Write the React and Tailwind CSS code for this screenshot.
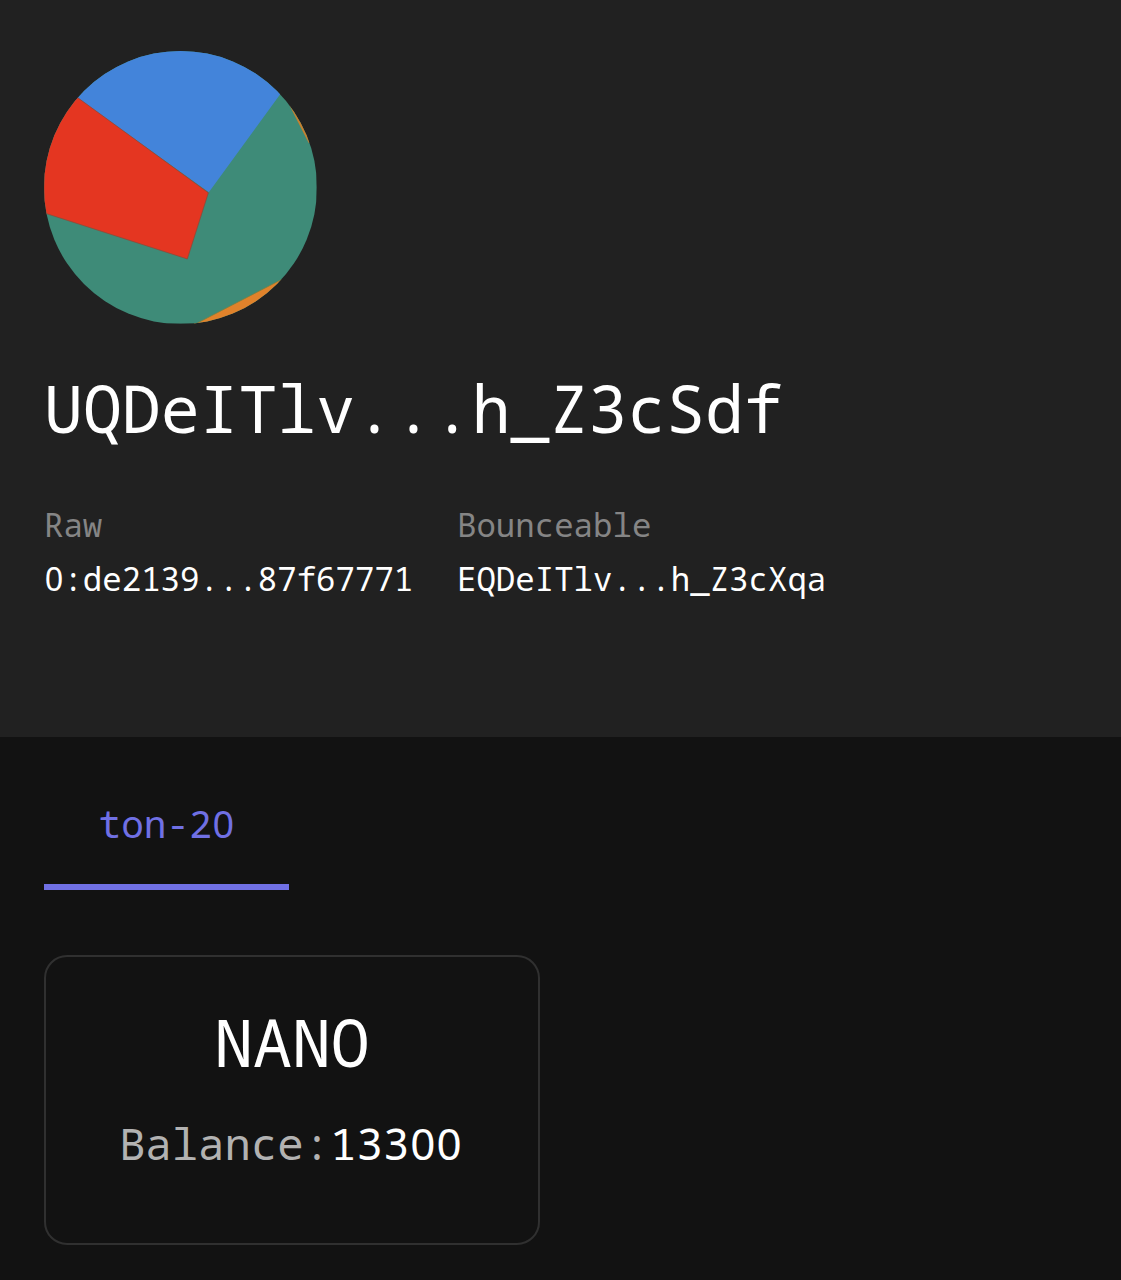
const ADDRESSES = [
  { label: "Raw", value: "0:de2139...87f67771", width: "w-[413px]" },
  { label: "Bounceable", value: "EQDeITlv...h_Z3cXqa", width: "w-[413px]" },
];

// Monospaced text whose zeros are plain rather than slashed.
function Mono({ children }) {
  return children.split(/(0)/).map((part, i) =>
    part === "0" ? (
      <span key={i} className="ml-[0.02em] font-['Noto_Sans'] tracking-[0.008em]">0</span>
    ) : (
      part
    )
  );
}

function Avatar() {
  return (
    <svg viewBox="0 0 272 272" className="block size-[272.6px] rounded-full">
      <rect width="272" height="272" fill="#3e8b78" />
      <path d="M0 0H272L235.500 43.500L164.500 141L33 47Z" fill="#4384da" />
      <path d="M0 23L33.500 46.500L164 141.500L143 207.500L0 161.500Z" fill="#e43621" stroke="#8f4a38" strokeWidth="0.800" />
      <path d="M150 273L238 227.500V272H150Z" fill="#e0822b" stroke="#7d8040" strokeWidth="0.800" />
      <path d="M245 54.500L264 91.500L272 91V54Z" fill="#c8802e" />
    </svg>
  );
}

export default function App() {
  return (
    <div className="flex h-[1280px] w-full flex-col overflow-hidden bg-[#121212] font-['Noto_Sans_Mono','DejaVu_Sans_Mono',monospace] text-white">
      <header className="h-[737px] shrink-0 bg-[#212121] px-[44px] pt-[51px]">
        <div className="h-[272px]">
          <Avatar />
        </div>
        <h1 className="mt-[45px] text-[64.8px] leading-[80px]">UQDeITlv...h_Z3cSdf</h1>
        <dl className="mt-[54px] flex text-[32.4px]">
          {ADDRESSES.map(({ label, value, width }) => (
            <div key={label} className={width}>
              <dt className="h-[44px] leading-[44px] text-[#858585]">{label}</dt>
              <dd className="mt-[10px] h-[44px] leading-[44px]"><Mono>{value}</Mono></dd>
            </div>
          ))}
        </dl>
      </header>
      <main className="px-[44px] pt-[61px]">
        <nav className="flex">
          <button className="h-[92px] w-[245px] border-b-6 border-[#7070e4] pb-[34px] text-[37.8px] leading-[52px] text-[#7070e4]">
            <Mono>ton-20</Mono>
          </button>
        </nav>
        <article className="mt-[65px] flex h-[290px] w-[496px] flex-col items-center rounded-[23px] border-2 border-[#303030] pt-[45px]">
          <h2 className="h-[80px] text-[64.8px] leading-[80px]">NANO</h2>
          <p className="mt-[31px] h-[60px] pr-[3px] text-[44px] leading-[60px]">
            <span className="text-[#b2b2b2]">Balance:</span>
            <Mono>13300</Mono>
          </p>
        </article>
      </main>
    </div>
  );
}
